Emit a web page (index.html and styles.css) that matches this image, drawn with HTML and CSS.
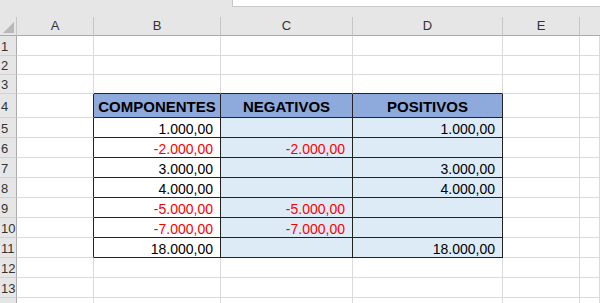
FILE: index.html
```html
<!DOCTYPE html>
<html>
<head>
<meta charset="utf-8">
<link rel="stylesheet" href="styles.css">
</head>
<body>
<div class="topbar"><div class="namebox"></div></div>
<div class="sheet">
  <div class="ch corner"><span class="tri"></span></div>
  <div class="ch">A</div><div class="ch">B</div><div class="ch">C</div><div class="ch">D</div><div class="ch">E</div><div class="ch last"></div>

  <div class="rh">1</div><div class="c"></div><div class="c"></div><div class="c"></div><div class="c"></div><div class="c"></div><div class="c"></div>
  <div class="rh">2</div><div class="c"></div><div class="c"></div><div class="c"></div><div class="c"></div><div class="c"></div><div class="c"></div>
  <div class="rh">3</div><div class="c"></div><div class="c above"></div><div class="c above"></div><div class="c above"></div><div class="c"></div><div class="c"></div>

  <div class="rh">4</div><div class="c before"></div><div class="c t hd">COMPONENTES</div><div class="c t hd">NEGATIVOS</div><div class="c t hd">POSITIVOS</div><div class="c"></div><div class="c"></div>

  <div class="rh">5</div><div class="c before"></div><div class="c t num">1.000,00</div><div class="c t fill"></div><div class="c t fill num">1.000,00</div><div class="c"></div><div class="c"></div>
  <div class="rh">6</div><div class="c before"></div><div class="c t num neg">-2.000,00</div><div class="c t fill num neg">-2.000,00</div><div class="c t fill"></div><div class="c"></div><div class="c"></div>
  <div class="rh">7</div><div class="c before"></div><div class="c t num">3.000,00</div><div class="c t fill"></div><div class="c t fill num">3.000,00</div><div class="c"></div><div class="c"></div>
  <div class="rh">8</div><div class="c before"></div><div class="c t num">4.000,00</div><div class="c t fill"></div><div class="c t fill num">4.000,00</div><div class="c"></div><div class="c"></div>
  <div class="rh">9</div><div class="c before"></div><div class="c t num neg">-5.000,00</div><div class="c t fill num neg">-5.000,00</div><div class="c t fill"></div><div class="c"></div><div class="c"></div>
  <div class="rh">10</div><div class="c before"></div><div class="c t num neg">-7.000,00</div><div class="c t fill num neg">-7.000,00</div><div class="c t fill"></div><div class="c"></div><div class="c"></div>
  <div class="rh">11</div><div class="c before"></div><div class="c t num">18.000,00</div><div class="c t fill"></div><div class="c t fill num">18.000,00</div><div class="c"></div><div class="c"></div>

  <div class="rh">12</div><div class="c"></div><div class="c"></div><div class="c"></div><div class="c"></div><div class="c"></div><div class="c"></div>
  <div class="rh">13</div><div class="c"></div><div class="c"></div><div class="c"></div><div class="c"></div><div class="c"></div><div class="c"></div>
  <div class="rh"></div><div class="c"></div><div class="c"></div><div class="c"></div><div class="c"></div><div class="c"></div><div class="c"></div>
</div>
</body>
</html>
```

FILE: styles.css
```css
* { box-sizing: border-box; }
html, body { margin: 0; padding: 0; background: #e6e6e6; overflow: hidden; }
body { width: 600px; height: 303px; font-family: "Liberation Sans", Arial, sans-serif; }

.topbar { height: 17px; background: #e6e6e6; position: relative; }
.namebox { position: absolute; left: 232px; top: 0; right: 0; height: 7px; background: #fff; border-left: 1px solid #c8c8c8; border-bottom: 1px solid #c8c8c8; }

.sheet {
  display: grid;
  grid-template-columns: 17px 77px 127px 132px 150px 77px 1fr;
  grid-template-rows: 19px 20px 19px 19px 24px repeat(7, 20px) 20px 20px 20px;
  background: #fff;
}

.ch {
  background: #e6e6e6;
  border-bottom: 1px solid #ababab;
  border-right: 1px solid #c6c6c6;
  color: #333;
  font-size: 13px;
  display: flex; align-items: center; justify-content: center;
  padding-bottom: 1px;
}
.ch.corner { position: relative; border-right: 1px solid #c6c6c6; }
.ch.last { border-right: none; }
.tri {
  position: absolute; right: 2px; bottom: 2px;
  width: 0; height: 0;
  border-left: 11px solid transparent;
  border-bottom: 11px solid #b8b8b8;
}

.rh {
  background: #e6e6e6;
  border-right: 1px solid #ababab;
  border-bottom: 1px solid #d0d0d0;
  color: #333;
  font-size: 13px;
  display: flex; align-items: center;
  padding-left: 1px;
  padding-top: 1px;
}

.c {
  background: #fff;
  border-right: 1px solid #dadada;
  border-bottom: 1px solid #dadada;
  font-size: 14px;
  color: #000;
  display: flex; align-items: center;
  white-space: nowrap;
}
.c.above { border-bottom-color: #222; }
.c.before { border-right-color: #222; }
.c.t { border-right-color: #222; border-bottom-color: #222; }
.c.hd {
  background: #8ea9db;
  font-weight: bold;
  font-size: 15px;
  justify-content: center;
  padding-top: 2px;
}
.c.fill { background: #ddebf7; }
.c.num { justify-content: flex-end; padding-right: 7px; padding-top: 2px; }
.c.neg { color: #ff0000; }
```
